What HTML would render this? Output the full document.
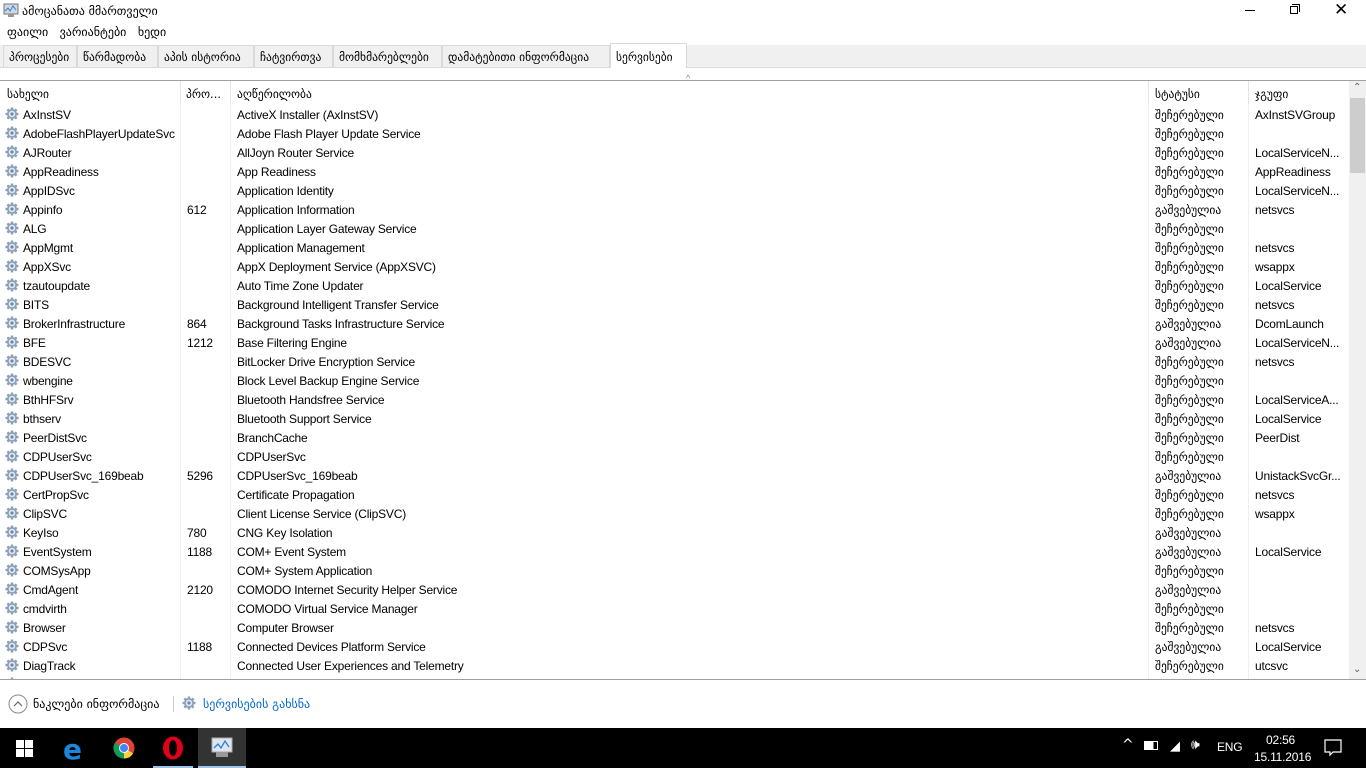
<!DOCTYPE html><html><head><meta charset="utf-8"><style>
*{margin:0;padding:0;box-sizing:border-box}
body{width:1366px;height:768px;overflow:hidden;background:#fff;font-family:"Liberation Sans","DejaVu Sans",sans-serif;font-size:12px;letter-spacing:-0.2px;color:#000;position:relative}
.geo{font-family:"DejaVu Sans",sans-serif;font-size:11.5px;letter-spacing:0}
.abs{position:absolute;white-space:nowrap}
.tabs{position:absolute;top:45px;left:0;width:1366px;height:23px;background:#f0f0f0;border-bottom:1px solid #d9d9d9}
.tab{position:absolute;top:0;height:22px;border:1px solid #d9d9d9;border-bottom:none;background:#f0f0f0;padding:4px 0 0 5px;font-family:"DejaVu Sans",sans-serif;font-size:11.5px;letter-spacing:0}
.tab.sel{background:#fff;top:-2px;height:25px;border-color:#d9d9d9;padding-top:6px}
.row{position:absolute;left:0;width:1349px;height:19px}
.row span{position:absolute;top:3px;white-space:nowrap}
.vl{position:absolute;top:81px;height:598px;width:1px;background:#eef0f5}
svg.g{position:absolute;left:5px;top:2px}
</style></head><body>
<svg width="0" height="0" style="position:absolute"><defs><g id="gear"><circle cx="7" cy="7" r="5" fill="#8aa0b8"/><g stroke="#8aa0b8" stroke-width="2.4"><line x1="7" y1="0.5" x2="7" y2="13.5"/><line x1="0.5" y1="7" x2="13.5" y2="7"/><line x1="2.4" y1="2.4" x2="11.6" y2="11.6"/><line x1="11.6" y1="2.4" x2="2.4" y2="11.6"/></g><circle cx="7" cy="7" r="3.3" fill="#dfe8f2"/><circle cx="7" cy="7" r="1.6" fill="#6f88a3"/></g></defs></svg>
<svg class="abs" style="left:3px;top:3px" width="16" height="15"><rect x="1" y="1" width="14" height="10" fill="#cfd8e0" stroke="#777"/><polyline points="2,8 5,5 7,8 10,3 13,7" fill="none" stroke="#2a7fd4"/><rect x="5" y="11" width="6" height="3" fill="#999"/></svg>
<div class="abs geo" style="left:22px;top:4px;font-size:12px">ამოცანათა მმართველი</div>
<div class="abs" style="left:1245px;top:10px;width:10px;height:1px;background:#000"></div>
<div class="abs" style="left:1290px;top:6px;width:8px;height:8px;border:1px solid #000;background:#fff"></div>
<div class="abs" style="left:1292px;top:4px;width:8px;height:8px;border-top:1px solid #000;border-right:1px solid #000"></div>
<div class="abs" style="left:1334px;top:0px;font-size:17px;font-family:'DejaVu Sans'">✕</div>
<div class="abs geo" style="left:7px;top:25px;font-size:12px">ფაილი&nbsp;&nbsp;&nbsp;ვარიანტები&nbsp;&nbsp;&nbsp;ხედი</div>
<div class="tabs">
<div class="tab" style="left:3px;width:74px">პროცესები</div>
<div class="tab" style="left:77px;width:81px">წარმადობა</div>
<div class="tab" style="left:158px;width:96px">აპის ისტორია</div>
<div class="tab" style="left:254px;width:79px">ჩატვირთვა</div>
<div class="tab" style="left:333px;width:109px">მომხმარებლები</div>
<div class="tab" style="left:442px;width:168px">დამატებითი ინფორმაცია</div>
<div class="tab sel" style="left:610px;width:77px">სერვისები</div>
</div>
<div class="abs" style="left:0;top:80px;width:1366px;height:1px;background:#a0a0a0"></div>
<div class="abs" style="left:686px;top:73px;font-size:9px;color:#888">^</div>
<div class="vl" style="left:180px;top:81px;background:#e5e5e5;height:23px"></div>
<div class="vl" style="left:230px;top:81px;background:#e5e5e5;height:23px"></div>
<div class="vl" style="left:1148px;top:81px;background:#e5e5e5;height:23px"></div>
<div class="vl" style="left:1248px;top:81px;background:#e5e5e5;height:23px"></div>
<div class="vl" style="left:180px;top:104px;height:575px"></div>
<div class="vl" style="left:230px;top:104px;height:575px"></div>
<div class="vl" style="left:1148px;top:104px;height:575px"></div>
<div class="vl" style="left:1248px;top:104px;height:575px"></div>
<div class="abs geo" style="left:7px;top:87px">სახელი</div>
<div class="abs geo" style="left:186px;top:87px">პრო...</div>
<div class="abs geo" style="left:237px;top:87px">აღწერილობა</div>
<div class="abs geo" style="left:1155px;top:87px">სტატუსი</div>
<div class="abs geo" style="left:1255px;top:87px">ჯგუფი</div>
<div class="abs" style="left:1349px;top:81px;width:17px;height:598px;background:#f0f0f0"></div>
<div class="abs" style="left:1350px;top:98px;width:15px;height:75px;background:#cdcdcd"></div>
<div class="abs" style="left:1353px;top:82px;font-size:10px;color:#606060">⌃</div>
<div class="abs" style="left:1353px;top:664px;font-size:10px;color:#606060">⌄</div>
<div id="rows"></div>
<div class="abs" style="left:0;top:679px;width:1366px;height:1px;background:#a0a0a0"></div>
<svg class="abs" style="left:8px;top:694px" width="20" height="20"><circle cx="10" cy="10" r="9" fill="none" stroke="#888"/><polyline points="6,12 10,8 14,12" fill="none" stroke="#666" stroke-width="1.2"/></svg>
<div class="abs geo" style="left:33px;top:697px;font-size:12px">ნაკლები ინფორმაცია</div>
<div class="abs" style="left:173px;top:696px;width:1px;height:16px;background:#ccc"></div>
<svg class="abs" style="left:182px;top:696px" width="16" height="16"><use href="#gear"/></svg>
<div class="abs geo" style="left:203px;top:697px;font-size:12px;color:#0066cc">სერვისების გახსნა</div>
<div class="abs" style="left:0;top:728px;width:1366px;height:40px;background:#000"></div>
<svg class="abs" style="left:16px;top:740px" width="17" height="17"><g fill="#fff"><rect x="0" y="0" width="8" height="8"/><rect x="9" y="0" width="8" height="8"/><rect x="0" y="9" width="8" height="8"/><rect x="9" y="9" width="8" height="8"/></g></svg>
<div class="abs" style="left:63px;top:733px;font-size:28px;color:#1a86dc;font-family:'DejaVu Sans';font-weight:bold">e</div>
<svg class="abs" style="left:113px;top:737px" width="22" height="22"><circle cx="11" cy="11" r="10.5" fill="#db4437"/><path d="M11 11 L20.1 16.2 A10.5 10.5 0 0 1 1.9 16.2 Z" fill="#0f9d58"/><path d="M11 11 L1.9 16.2 A10.5 10.5 0 0 1 1.9 5.8 Z" fill="#0f9d58"/><path d="M11 11 L20.1 16.2 A10.5 10.5 0 0 1 11 21.5Z" fill="#ffcd40"/><circle cx="11" cy="11" r="5" fill="#fff"/><circle cx="11" cy="11" r="4" fill="#4285f4"/></svg>
<svg class="abs" style="left:162px;top:736px" width="22" height="24"><ellipse cx="11" cy="12" rx="10" ry="11.5" fill="#e0001b"/><ellipse cx="11" cy="12" rx="4" ry="8" fill="#000"/></svg>
<div class="abs" style="left:198px;top:728px;width:48px;height:40px;background:#333"></div>
<div class="abs" style="left:198px;top:766px;width:48px;height:2px;background:#9ec3ea"></div>
<div class="abs" style="left:153px;top:766px;width:40px;height:2px;background:#9ec3ea"></div>
<svg class="abs" style="left:210px;top:737px" width="24" height="22"><rect x="2" y="1" width="20" height="14" fill="#dde6ee" stroke="#aaa"/><polyline points="4,11 8,7 11,11 15,4 19,10" fill="none" stroke="#2a7fd4" stroke-width="1.3"/><rect x="6" y="15" width="12" height="5" fill="#999"/></svg>
<div class="abs" style="left:1122px;top:737px;color:#fff;font-size:14px;font-family:'DejaVu Sans'">^</div>
<div class="abs" style="left:1144px;top:741px;width:14px;height:9px;border:1px solid #fff;background:linear-gradient(90deg,#fff 70%,#000 70%)"></div>
<div class="abs" style="left:1170px;top:738px;color:#fff;font-size:13px">◢</div>
<div class="abs" style="left:1191px;top:737px;color:#fff;font-size:14px;font-family:'DejaVu Sans'">🕪</div>
<div class="abs" style="left:1217px;top:740px;color:#fff;font-size:12px">ENG</div>
<div class="abs" style="left:1266px;top:733px;color:#fff;font-size:12px">02:56</div>
<div class="abs" style="left:1254px;top:750px;color:#fff;font-size:12px">15.11.2016</div>
<svg class="abs" style="left:1324px;top:739px" width="18" height="18"><path d="M1 1 H17 V13 H9 L6 16 V13 H1 Z" fill="none" stroke="#fff" stroke-width="1.2"/></svg>
<script>
var d=[["AxInstSV","","ActiveX Installer (AxInstSV)",0,"AxInstSVGroup"],
["AdobeFlashPlayerUpdateSvc","","Adobe Flash Player Update Service",0,""],
["AJRouter","","AllJoyn Router Service",0,"LocalServiceN..."],
["AppReadiness","","App Readiness",0,"AppReadiness"],
["AppIDSvc","","Application Identity",0,"LocalServiceN..."],
["Appinfo","612","Application Information",1,"netsvcs"],
["ALG","","Application Layer Gateway Service",0,""],
["AppMgmt","","Application Management",0,"netsvcs"],
["AppXSvc","","AppX Deployment Service (AppXSVC)",0,"wsappx"],
["tzautoupdate","","Auto Time Zone Updater",0,"LocalService"],
["BITS","","Background Intelligent Transfer Service",0,"netsvcs"],
["BrokerInfrastructure","864","Background Tasks Infrastructure Service",1,"DcomLaunch"],
["BFE","1212","Base Filtering Engine",1,"LocalServiceN..."],
["BDESVC","","BitLocker Drive Encryption Service",0,"netsvcs"],
["wbengine","","Block Level Backup Engine Service",0,""],
["BthHFSrv","","Bluetooth Handsfree Service",0,"LocalServiceA..."],
["bthserv","","Bluetooth Support Service",0,"LocalService"],
["PeerDistSvc","","BranchCache",0,"PeerDist"],
["CDPUserSvc","","CDPUserSvc",0,""],
["CDPUserSvc_169beab","5296","CDPUserSvc_169beab",1,"UnistackSvcGr..."],
["CertPropSvc","","Certificate Propagation",0,"netsvcs"],
["ClipSVC","","Client License Service (ClipSVC)",0,"wsappx"],
["KeyIso","780","CNG Key Isolation",1,""],
["EventSystem","1188","COM+ Event System",1,"LocalService"],
["COMSysApp","","COM+ System Application",0,""],
["CmdAgent","2120","COMODO Internet Security Helper Service",1,""],
["cmdvirth","","COMODO Virtual Service Manager",0,""],
["Browser","","Computer Browser",0,"netsvcs"],
["CDPSvc","1188","Connected Devices Platform Service",1,"LocalService"],
["DiagTrack","","Connected User Experiences and Telemetry",0,"utcsvc"],
["","","",0,""]];
var h="";d.forEach(function(r,i){var t=105+i*19;h+='<div class="row" style="top:'+t+'px;'+(i==30?'height:5px;overflow:hidden':'')+'"><svg class="g" width="14" height="14"><use href="#gear"/></svg><span style="left:23px">'+r[0]+'</span><span style="left:187px">'+r[1]+'</span><span style="left:237px">'+r[2]+'</span><span class="geo" style="left:1155px;top:3px">'+(r[0]?(r[3]?'გაშვებულია':'შეჩერებული'):'')+'</span><span style="left:1255px">'+r[4]+'</span></div>';});
document.getElementById("rows").innerHTML=h;
</script>
</body></html>
